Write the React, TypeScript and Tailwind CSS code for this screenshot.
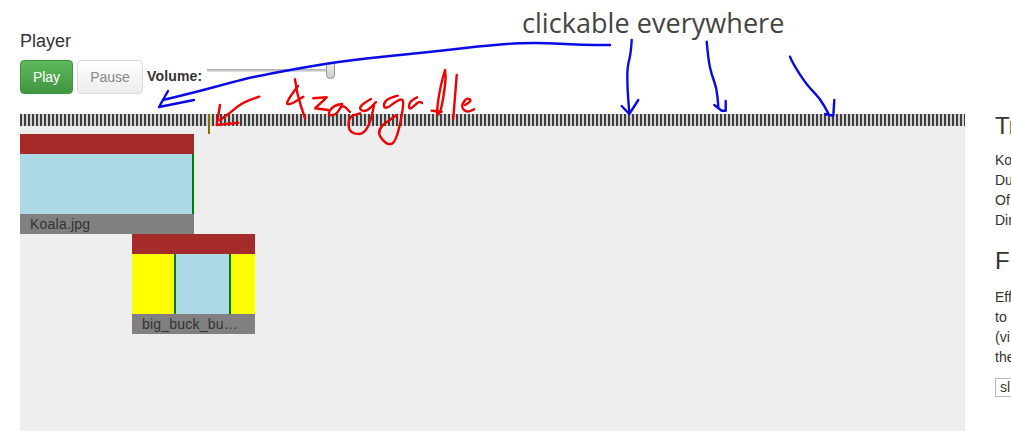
const FONT = "font-['Liberation_Sans',Arial,sans-serif]";

/* ── Timeline clip ───────────────────────────────── */
function Clip({ label, children, className }: { label: string; children: React.ReactNode; className: string }) {
  return (
    <div className={className}>
      <div className="h-5 bg-[#a52a2a]" />
      <div className="h-[60px] flex">{children}</div>
      <div className="h-5 bg-[#808080] px-2.5 text-sm leading-5 tracking-[0.22px] text-[#333] truncate">{label}</div>
    </div>
  );
}

/* round the corners of a hand drawn line */
function smooth(pts: number[][]) {
  let d = `M${pts[0][0]} ${pts[0][1]}`;
  for (let i = 1; i < pts.length - 1; i++) {
    const mx = (pts[i][0] + pts[i + 1][0]) / 2;
    const my = (pts[i][1] + pts[i + 1][1]) / 2;
    d += ` Q${pts[i][0]} ${pts[i][1]} ${mx} ${my}`;
  }
  const last = pts[pts.length - 1];
  return `${d} L${last[0]} ${last[1]}`;
}

/* ── Hand drawn notes on top of the page ─────────── */
function Scribbles() {
  const blue = [
    [[610, 45], [580, 45], [540, 42.5], [500, 44], [430, 52], [350, 60], [300, 68], [253, 77], [233, 82], [200, 91], [163, 100]],
    [[631.7, 40], [631, 53], [627.3, 67], [627.3, 87], [629.3, 113]],
    [[706.7, 41.7], [708.3, 60], [711.7, 75], [716.7, 88], [718.3, 106.7]],
    [[790, 56.7], [791.7, 61.7], [806.7, 85], [820, 98.3], [828.3, 113.3]],
  ];
  const blueHeads = [
    'M168 91 L159 107 L194 100',
    'M621.7 106 L629.3 114 L638.3 100',
    'M714.3 105 L721.7 110.7 L725.7 110.7 L725.7 101',
    'M825 114 L833.3 115.7 L834.3 100',
  ];
  const redSharp = [
    'M220 105 L216.7 125 L238.3 122.7',
    'M313.3 98.3 L326.7 97.3 L315 108.3 L328.3 110',
    'M456.7 75 L453.3 118.3',
    'M431.7 110.7 L441.7 111.7',
  ];
  const red = [
    [[259.3, 96.7], [243.3, 101.7], [231.7, 111.7], [220, 120]],
    [[295, 79.3], [296.7, 93.3], [305, 118.3]],
    [[298, 86], [285, 103], [290, 105], [303.3, 96.7]],
    [[342, 104], [333, 105], [327, 116], [337, 114.3], [342, 104], [350, 112]],
    [[371, 99], [357, 106.7], [365, 113], [376, 102]],
    [[374, 105], [369, 134], [349, 134], [348, 117], [360, 113.3]],
    [[397.7, 95.7], [384, 99], [384, 111], [401, 97.3], [404.3, 103.3], [396, 143], [386, 145], [375.7, 130], [396.7, 115]],
    [[417, 97.3], [409, 101], [409, 111], [419, 101], [422, 103]],
    [[445, 70], [440, 86.7], [436, 117], [441, 112], [446, 80], [445, 70]],
    [[465, 105], [472.5, 101], [466.7, 97.3], [460.7, 106.7], [466.7, 112.7], [474, 109.3]],
  ];
  return (
    <svg className="absolute inset-0 pointer-events-none" width="1011" height="431" fill="none" strokeWidth="2.4" strokeLinecap="round" strokeLinejoin="round">
      {blue.map((p, i) => <path key={i} d={smooth(p)} stroke="#0a0ae6" />)}
      {blueHeads.map(d => <path key={d} d={d} stroke="#0a0ae6" />)}
      {red.map((p, i) => <path key={i} d={smooth(p)} stroke="#f00000" />)}
      {redSharp.map(d => <path key={d} d={d} stroke="#f00000" />)}
    </svg>
  );
}

export default function App() {
  return (
    <div className={`${FONT} relative w-[1011px] h-[431px] overflow-hidden bg-white flex text-[#333]`}>
      {/* ── Player and timeline ───────────────────── */}
      <div className="w-[965px] pl-5 shrink-0 flex flex-col">
        <div className="pt-[31px] h-[60px] text-lg leading-5">Player</div>

        <div className="flex items-center h-[34px]">
          <button className="w-[53px] h-[34px] rounded border border-[#419641] bg-gradient-to-b from-[#5cb85c] to-[#419641] text-sm text-white">
            Play
          </button>
          <button className="w-[66px] h-[34px] ml-1 rounded border border-[#dbdbdb] bg-gradient-to-b from-white to-[#ececec] text-sm text-[#888]">
            Pause
          </button>
          <span className="ml-1 w-14 text-sm font-bold tracking-[0.15px] leading-5 mb-[3px] whitespace-nowrap">Volume:</span>
          <div className="relative ml-1 w-[128px] h-[3px] mb-[14px] bg-gradient-to-b from-[#aaa] to-[#e4e4e4]">
            <div className="absolute left-[119px] -top-[6px] w-[9px] h-[16px] rounded-b-[4px] border border-[#999] bg-gradient-to-b from-[#eee] to-[#ccc]" />
          </div>
        </div>

        <div className="h-5" />
        <div className="h-3 bg-[repeating-linear-gradient(90deg,#404040_0,#404040_2px,#d2d2d2_2px,#d2d2d2_4px)]" />

        <div className="relative flex-1 bg-[#eee] pt-2">
          {/* playhead */}
          <div className="absolute left-[188px] -top-3 w-0.5 h-5 bg-[#7f7000]" />
          <Clip label="Koala.jpg" className="w-[174px]">
            <div className="flex-1 bg-[#add8e6] border-r-2 border-[#008000]" />
          </Clip>
          <Clip label="big_buck_bunny.mp4" className="w-[123px] ml-[112px]">
            <div className="w-[42px] bg-[#ffff00]" />
            <div className="flex-1 bg-[#add8e6] border-x-2 border-[#008000]" />
            <div className="w-6 bg-[#ffff00]" />
          </Clip>
        </div>
      </div>

      {/* ── Side panel, cut off by the window ─────── */}
      <div className="ml-[30px] w-[60px] shrink-0 pt-[110px] text-sm leading-5 whitespace-nowrap">
        <div className="text-2xl leading-[32px] mb-[8px]">Tr</div>
        <div>Ko</div>
        <div>Du</div>
        <div>Of</div>
        <div>Dim</div>
        <div className="text-2xl leading-[32px] mt-[15px] mb-[10px]">F</div>
        <div>Eff</div>
        <div>to</div>
        <div>(vi</div>
        <div>the</div>
        <div className="mt-[11px] w-[40px] h-[19px] border border-[#bbb] pl-[4px] leading-[17px]">sl</div>
      </div>

      <div className="absolute left-[522px] top-[5px] font-['Open_Sans',sans-serif] text-[27px] tracking-[0.05px] leading-9 text-[#444] whitespace-nowrap">
        clickable everywhere
      </div>
      <Scribbles />
    </div>
  );
}
